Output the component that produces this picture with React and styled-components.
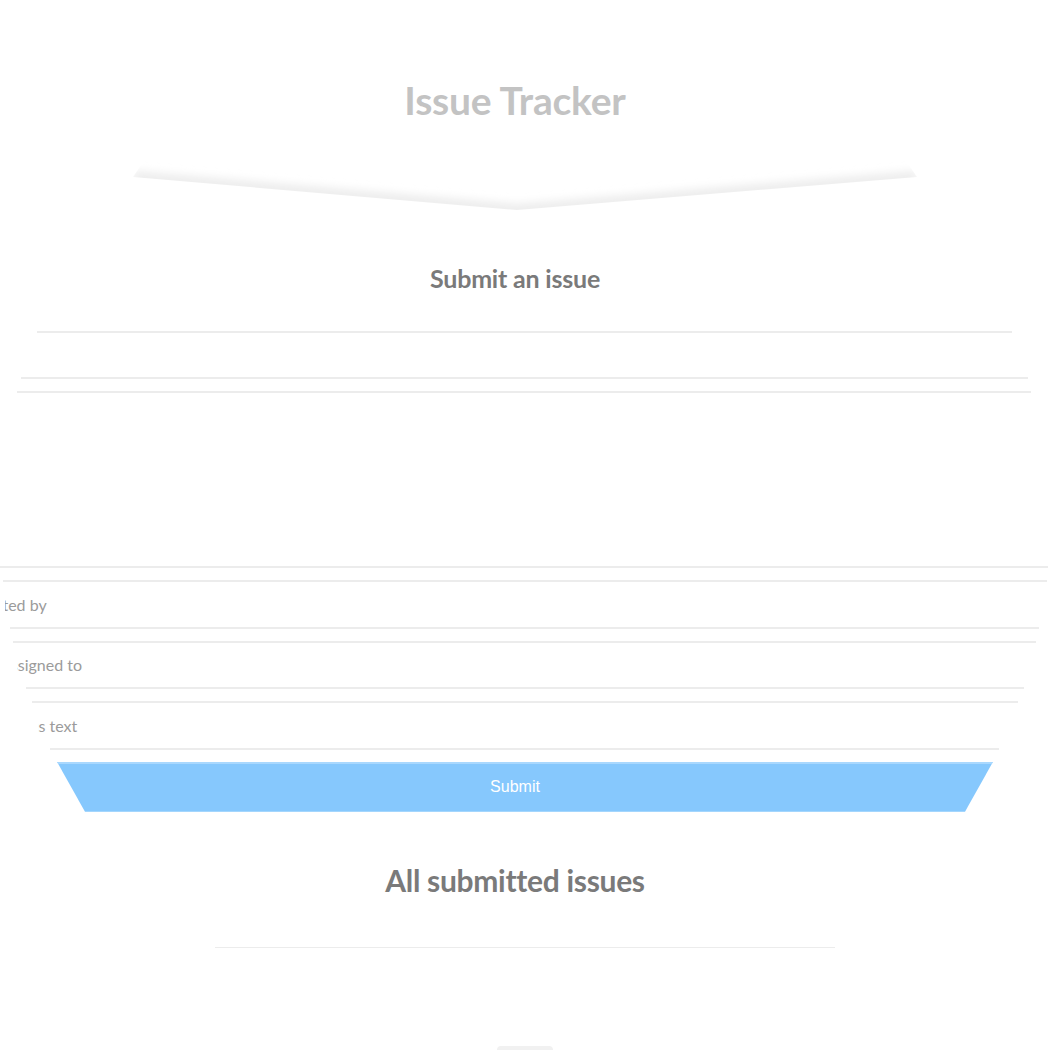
import React from 'react'
import styled, { createGlobalStyle } from 'styled-components'

const Global = createGlobalStyle`
  html, body { margin: 0; padding: 0; background: #fff; }
  body { font-family: Lato, "Open Sans", sans-serif; }
`

const Page = styled.div`
  width: 1050px;
  height: 1050px;
  overflow: hidden;
  display: flex;
  flex-direction: column;
`

const Header = styled.header`
  display: flex;
  flex-direction: column;
  align-items: center;
  padding-top: 77px;
`

const Title = styled.h1`
  margin: 0 20px 0 0;
  font: 700 39px/1.2 Lato, sans-serif;
  letter-spacing: -0.2px;
  color: #c3c3c3;
`

const Chevron = styled.svg`
  display: block;
  margin-top: 26px;
`

const Heading = styled.h2`
  margin: ${p => p.$top}px 0 0;
  padding-right: 20px;
  text-align: center;
  font: 700 ${p => p.$size}px/1.2 Lato, sans-serif;
  letter-spacing: ${p => p.$track || 0}px;
  color: #7a7a7a;
`

const Rule = styled.div`
  height: 2px;
  background: #ececec;
  margin: 0 ${p => p.$r}px 0 ${p => p.$l}px;
`

const Form = styled.form`
  display: flex;
  flex-direction: column;
  gap: 12px;
  margin-top: 38px;
`

const FieldWrap = styled.div`
  display: flex;
  flex-direction: column;
`

const FieldBody = styled.div`
  height: ${p => p.$h}px;
  margin-left: ${p => p.$clip}px;
  display: flex;
  align-items: center;
  overflow: hidden;
`

const Placeholder = styled.span`
  margin-left: ${p => p.$x}px;
  white-space: nowrap;
  font: 400 16px Lato, sans-serif;
  color: #9b9b9b;
`

const SubmitButton = styled.button`
  margin-left: 57px;
  width: 936px;
  height: 50px;
  border: none;
  padding: 0 20px 0 0;
  background: #86c8fd;
  box-shadow: inset 0 2px 0 #a9d8fe;
  clip-path: polygon(0 0, 100% 0, calc(100% - 28px) 100%, 28px 100%);
  color: #fff;
  font: 400 16px "Liberation Sans", Arial, sans-serif;
  cursor: pointer;
`

const ListRule = styled(Rule)`
  margin-top: 49px;
`

const IssueStub = styled.div`
  align-self: center;
  margin-top: 99px;
  width: 56px;
  height: 30px;
  border-radius: 16px 16px 0 0;
  background: #f1f1f1;
`

const fields = [
  { top: [37, 38], bottom: [21, 22], h: 44 },
  { top: [17, 19], bottom: [0, 2], h: 173 },
  { top: [3, 3], bottom: [10, 11], h: 45, clip: 5, x: -35, text: 'Created by' },
  { top: [13, 14], bottom: [26, 26], h: 44, clip: 17, x: -17, text: 'Assigned to' },
  { top: [32, 32], bottom: [50, 51], h: 45, clip: 38, x: -36, text: 'Status text' },
]

const Field = ({ top, bottom, h, clip = 0, x = 0, text }) => (
  <FieldWrap>
    <Rule $l={top[0]} $r={top[1]} />
    <FieldBody $h={h} $clip={clip}>
      {text && <Placeholder $x={x}>{text}</Placeholder>}
    </FieldBody>
    <Rule $l={bottom[0]} $r={bottom[1]} />
  </FieldWrap>
)

const App = () => (
  <Page>
    <Global />
    <Header>
      <Title>Issue Tracker</Title>
      <Chevron width="1050" height="70" viewBox="0 0 1050 70">
        <defs>
          <filter id="soft" x="-5%" y="-50%" width="110%" height="200%">
            <feGaussianBlur stdDeviation="4" />
          </filter>
          <clipPath id="above">
            <polygon points="146,8 904,8 917,27 517,60 133,27" />
          </clipPath>
        </defs>
        <g clipPath="url(#above)">
          <polyline points="133,27 517,60 917,27" fill="none" stroke="#ececec" strokeWidth="12" filter="url(#soft)" />
        </g>
      </Chevron>
    </Header>

    <Heading $top={43} $size={25} $track={-0.2}>Submit an issue</Heading>

    <Form onSubmit={e => e.preventDefault()}>
      {fields.map((f, i) => <Field key={i} {...f} />)}
      <SubmitButton type="submit">Submit</SubmitButton>
    </Form>

    <Heading $top={50} $size={30} $track={-0.3}>All submitted issues</Heading>
    <ListRule $l={215} $r={215} />
    <IssueStub />
  </Page>
)

export default App
